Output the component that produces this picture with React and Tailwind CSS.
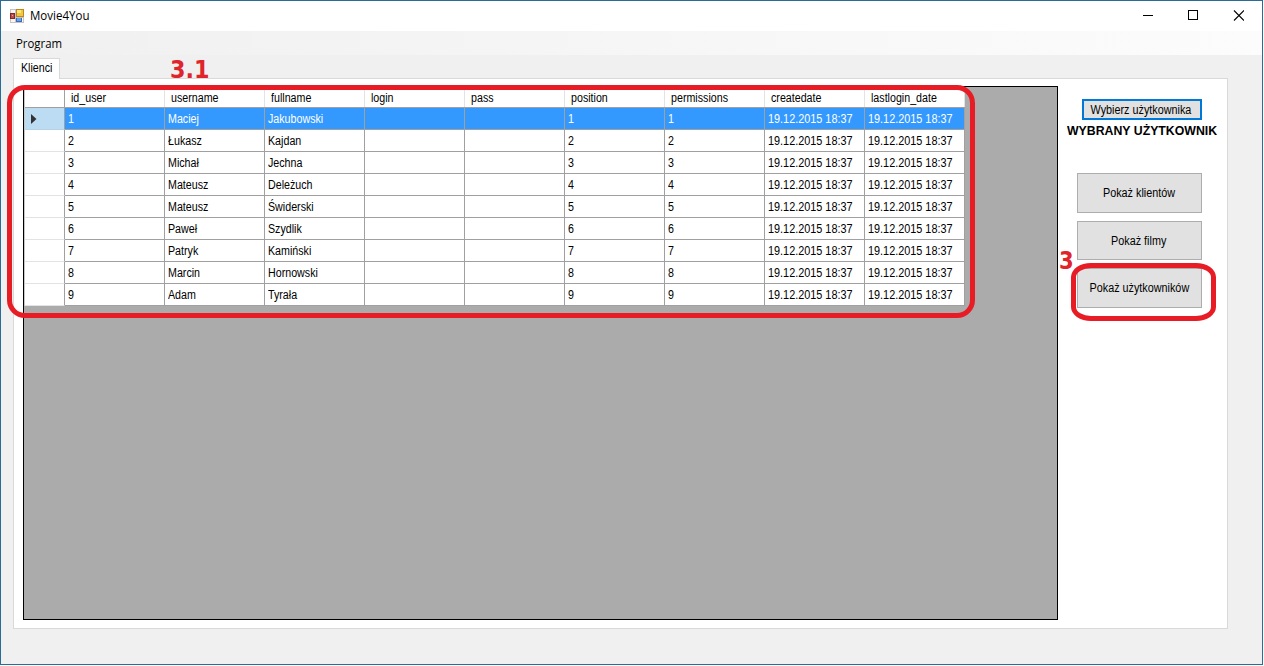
const columns = ["id_user", "username", "fullname", "login", "pass", "position", "permissions", "createdate", "lastlogin_date"];

const people = [
  ["Maciej", "Jakubowski"],
  ["Łukasz", "Kajdan"],
  ["Michał", "Jechna"],
  ["Mateusz", "Deleżuch"],
  ["Mateusz", "Świderski"],
  ["Paweł", "Szydlik"],
  ["Patryk", "Kamiński"],
  ["Marcin", "Hornowski"],
  ["Adam", "Tyrała"],
];

const date = "19.12.2015 18:37";
const rows = people.map(([first, last], i) => {
  const n = String(i + 1);
  return [n, first, last, "", "", n, n, date, date];
});

function Label({ children, className = "origin-left scale-x-[0.89]" }) {
  return <span className={`inline-block whitespace-nowrap ${className}`}>{children}</span>;
}

function AppIcon() {
  return (
    <svg width="14" height="14" viewBox="0 0 14 14" shapeRendering="crispEdges">
      <rect width="14" height="14" fill="#c4c4c4" />
      <rect x="1" y="1" width="4" height="3" fill="#f7f7f7" />
      <rect x="1" y="10" width="4" height="3" fill="#f7f7f7" />
      <rect x="12" y="9" width="1" height="4" fill="#f7f7f7" />
      <rect x="0" y="4" width="5" height="6" fill="#8d2424" />
      <rect x="1" y="5" width="3" height="4" fill="#b8504a" />
      <rect x="2" y="6" width="1" height="1" fill="#eda49c" />
      <rect x="6" y="0" width="8" height="8" fill="#b88a1c" />
      <rect x="7" y="1" width="6" height="6" fill="#f3c640" />
      <rect x="7" y="1" width="4" height="3" fill="#ffe482" />
      <rect x="6" y="9" width="6" height="4" fill="#3a6cba" />
      <rect x="7" y="9" width="4" height="3" fill="#6da2e8" />
    </svg>
  );
}

function TitleBar() {
  return (
    <header className="flex h-[30px] items-center bg-white pb-px pl-[9px] pr-[18px]">
      <AppIcon />
      <span className="ml-[6px] flex-1 pt-px font-['Open_Sans','Noto_Sans',sans-serif] text-[12px] leading-4">
        <Label className="origin-left scale-x-[0.96]">Movie4You</Label>
      </span>
      <svg width="102" height="11" viewBox="0 0 102 11" fill="none" stroke="#000">
        <path d="M1 5.5h10M46.5 .5h9v9h-9z" shapeRendering="crispEdges" />
        <path d="M92 .5l10 10M102 .5l-10 10" strokeWidth="1.1" />
      </svg>
    </header>
  );
}

function DataGrid() {
  return (
    <div className="h-[534px] w-[1035px] border border-black bg-[#ababab]">
      <div className="w-[941px] border-l border-[#c8c8c8]">
        <div className="flex h-[21px] border-b border-[#a0a0a0] bg-white">
          <div className="w-10 border-r border-[#a0a0a0]" />
          {columns.map((c) => (
            <div key={c} className="w-[100px] border-r border-[#e3e3e3] pl-[6px] leading-[22px]">
              <Label>{c}</Label>
            </div>
          ))}
        </div>
        {rows.map((row, i) => (
          <div key={row[0]} className="flex h-[22px]">
            <div
              className={`flex w-10 items-center border-b border-r border-r-[#a0a0a0] pl-[6px] ${
                i === 0 ? "border-b-[#b5d3e8] bg-[#bcdcf4]" : "border-b-[#e3e3e3] bg-white"
              }`}
            >
              {i === 0 && (
                <svg width="6" height="10" viewBox="0 0 6 10">
                  <path d="M0 0l5.5 5-5.5 5z" fill="#333" />
                </svg>
              )}
            </div>
            {row.map((v, j) => (
              <div
                key={j}
                className={`w-[100px] border-b border-r border-[#a0a0a0] pl-[3px] leading-[23px] ${
                  i === 0 ? "bg-[#3399ff] text-white" : "bg-white"
                }`}
              >
                <Label className={j > 6 ? "origin-left scale-x-[0.905]" : "origin-left scale-x-[0.89]"}>{v}</Label>
              </div>
            ))}
          </div>
        ))}
      </div>
    </div>
  );
}

function SideButton({ children, className }) {
  return (
    <button
      className={`flex w-[125px] items-center justify-center border border-[#adadad] bg-[#e1e1e1] pr-px ${className}`}
    >
      <Label className="scale-x-[0.9]">{children}</Label>
    </button>
  );
}

function SidePanel() {
  return (
    <aside className="ml-[9px] flex w-[152px] flex-col pt-[13px]">
      <button className="ml-[15px] flex h-[21px] w-[120px] items-center justify-center border-2 border-[#0078d7] bg-[#e1e1e1] pr-[2px]">
        <Label className="scale-x-[0.9]">Wybierz użytkownika</Label>
      </button>
      <div className="h-[53px] pt-[3px] leading-4">
        <Label className="origin-left scale-x-[1.025] font-bold">WYBRANY UŻYTKOWNIK</Label>
      </div>
      <div className="ml-[10px] flex flex-col">
        <SideButton className="h-10">Pokaż klientów</SideButton>
        <SideButton className="mt-2 h-[39px]">Pokaż filmy</SideButton>
        <SideButton className="mt-2 h-10">Pokaż użytkowników</SideButton>
      </div>
    </aside>
  );
}

export default function App() {
  return (
    <div className="relative h-[666px] w-[1264px] overflow-hidden bg-white font-['Liberation_Sans',Arial,sans-serif] text-[12px] text-black">
      <div className="flex h-[665px] w-[1263px] flex-col border border-[#2a6c97] bg-[#f0f0f0]">
        <TitleBar />
        <nav className="flex h-6 items-center bg-gradient-to-r from-[#f0f0f0] to-[#fcfcfc] pl-[15px] pt-[2px] font-['Open_Sans','Noto_Sans',sans-serif]">
          <Label className="origin-left scale-x-[0.95]">Program</Label>
        </nav>
        <main className="flex flex-col pl-3 pt-[3px]">
          <div className="z-10 -mb-px h-[21px] w-[47px] border border-b-0 border-[#d9d9d9] bg-white pl-[7px] leading-[19px]">
            <Label>Klienci</Label>
          </div>
          <section className="flex h-[551px] w-[1215px] border border-[#d9d9d9] bg-white pl-[9px] pt-[7px]">
            <DataGrid />
            <SidePanel />
          </section>
        </main>
      </div>

      <div className="absolute left-[7px] top-[85px] z-20 h-[233px] w-[968px] rounded-[18px] border-[5px] border-[#e81c24]" />
      <div className="absolute left-[1071px] top-[263px] z-20 h-[58px] w-[145px] rounded-[20px/14px] border-[5px] border-[#e81c24]" />
      <div className="absolute left-[170px] top-[54px] z-20 origin-left scale-x-[0.93] font-['DejaVu_Sans',sans-serif] text-[24px] font-bold leading-8 text-[#e0242b]">
        3.1
      </div>
      <div className="absolute left-[1059px] top-[245px] z-20 origin-left scale-x-[0.88] font-['DejaVu_Sans',sans-serif] text-[24px] font-bold leading-8 text-[#e0242b]">
        3
      </div>
    </div>
  );
}
